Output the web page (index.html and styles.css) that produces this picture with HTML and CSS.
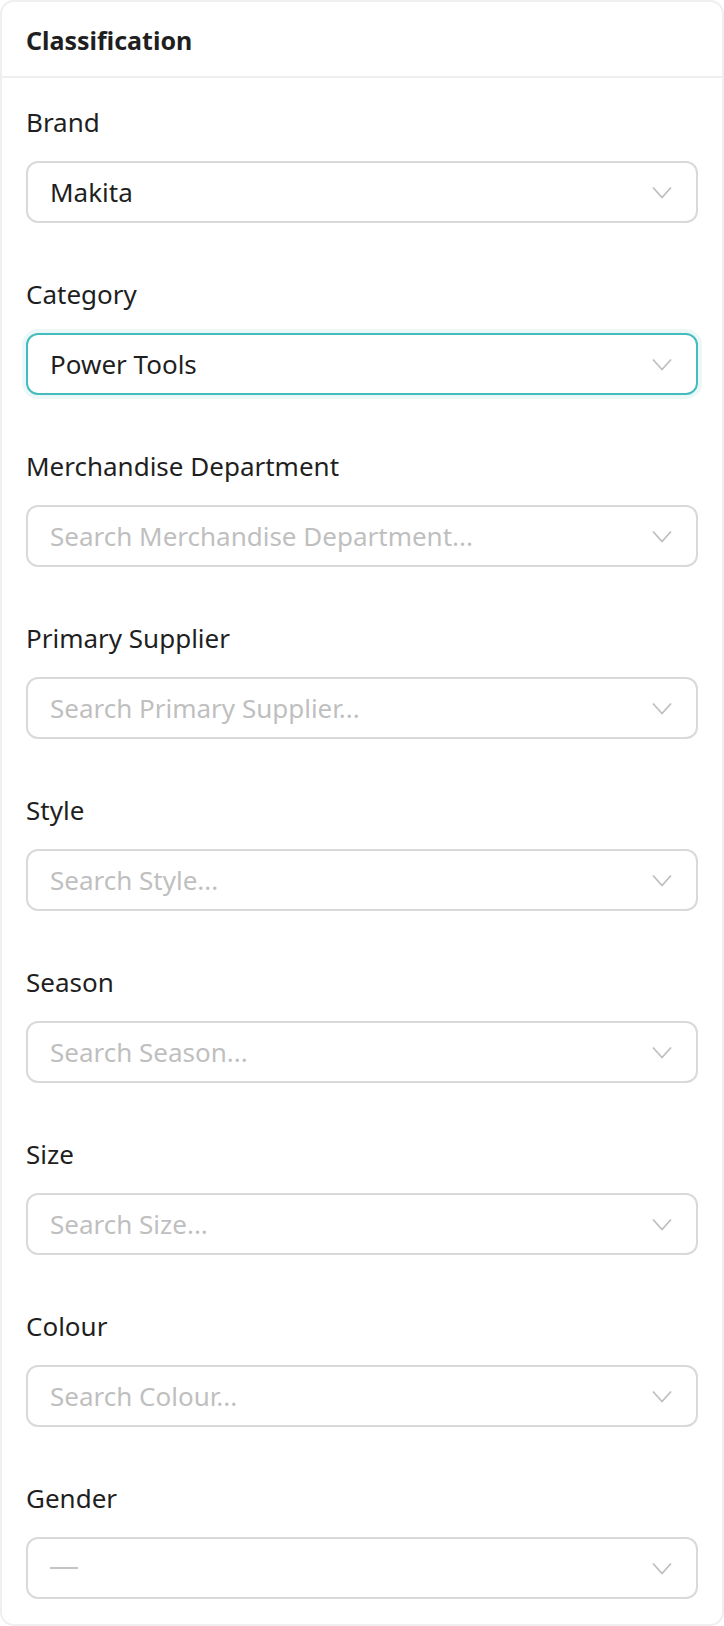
FILE: index.html
```html
<!DOCTYPE html>
<html lang="en">
<head>
<meta charset="utf-8">
<title>Classification</title>
<link rel="stylesheet" href="styles.css">
</head>
<body>
<section class="card">
  <header class="card-head">Classification</header>
  <div class="card-body">
    <div class="field">
      <label class="label">Brand</label>
      <div class="select"><span class="value">Makita</span><svg class="chev" viewBox="0 0 20 12"><polyline points="1,1 10,11 19,1"/></svg></div>
    </div>
    <div class="field">
      <label class="label">Category</label>
      <div class="select focused"><span class="value">Power Tools</span><svg class="chev" viewBox="0 0 20 12"><polyline points="1,1 10,11 19,1"/></svg></div>
    </div>
    <div class="field">
      <label class="label">Merchandise Department</label>
      <div class="select"><span class="placeholder">Search Merchandise Department...</span><svg class="chev" viewBox="0 0 20 12"><polyline points="1,1 10,11 19,1"/></svg></div>
    </div>
    <div class="field">
      <label class="label">Primary Supplier</label>
      <div class="select"><span class="placeholder">Search Primary Supplier...</span><svg class="chev" viewBox="0 0 20 12"><polyline points="1,1 10,11 19,1"/></svg></div>
    </div>
    <div class="field">
      <label class="label">Style</label>
      <div class="select"><span class="placeholder">Search Style...</span><svg class="chev" viewBox="0 0 20 12"><polyline points="1,1 10,11 19,1"/></svg></div>
    </div>
    <div class="field">
      <label class="label">Season</label>
      <div class="select"><span class="placeholder">Search Season...</span><svg class="chev" viewBox="0 0 20 12"><polyline points="1,1 10,11 19,1"/></svg></div>
    </div>
    <div class="field">
      <label class="label">Size</label>
      <div class="select"><span class="placeholder">Search Size...</span><svg class="chev" viewBox="0 0 20 12"><polyline points="1,1 10,11 19,1"/></svg></div>
    </div>
    <div class="field">
      <label class="label">Colour</label>
      <div class="select"><span class="placeholder">Search Colour...</span><svg class="chev" viewBox="0 0 20 12"><polyline points="1,1 10,11 19,1"/></svg></div>
    </div>
    <div class="field last">
      <label class="label">Gender</label>
      <div class="select"><span class="dash"></span><svg class="chev" viewBox="0 0 20 12"><polyline points="1,1 10,11 19,1"/></svg></div>
    </div>
  </div>
</section>
</body>
</html>
```
FILE: styles.css
```css
* { box-sizing: border-box; }
html, body { margin: 0; padding: 0; background: #ffffff; }
body {
  font-family: "Noto Sans", "Open Sans", sans-serif;
  color: #1f1f1f;
}
.card {
  width: 724px;
  height: 1626px;
  border: 2px solid #efefef;
  border-radius: 14px;
  background: #fff;
  display: flex;
  flex-direction: column;
}
.card-head {
  height: 76px;
  flex: none;
  display: flex;
  align-items: center;
  padding: 2px 24px 0 24px;
  border-bottom: 2px solid #efefef;
  font-size: 25px;
  font-weight: 700;
  color: #1f1f1f;
}
.card-body {
  padding: 22px 24px 0 24px;
  display: flex;
  flex-direction: column;
}
.field {
  display: flex;
  flex-direction: column;
  margin-bottom: 49px;
}
.field.last { margin-bottom: 0; }
.label {
  height: 44px;
  line-height: 44px;
  font-size: 26px;
  color: #1f1f1f;
  margin-bottom: 17px;
}
.select {
  height: 62px;
  border: 2px solid #d9d9d9;
  border-radius: 12px;
  display: flex;
  align-items: center;
  padding: 0 24px 0 22px;
  font-size: 26px;
}
.select.focused {
  border-color: #42bcbc;
  box-shadow: 0 0 0 4px rgba(66, 188, 188, 0.1);
}
.value { flex: 1; color: #1f1f1f; }
.placeholder { flex: 1; color: #bfbfbf; }
.dash {
  flex: none;
  width: 28px;
  height: 2px;
  background: #c4c4c4;
  margin-right: auto;
}
.chev {
  width: 20px;
  height: 13px;
  flex: none;
}
.chev polyline {
  fill: none;
  stroke: #bfbfbf;
  stroke-width: 1.8;
}
```
